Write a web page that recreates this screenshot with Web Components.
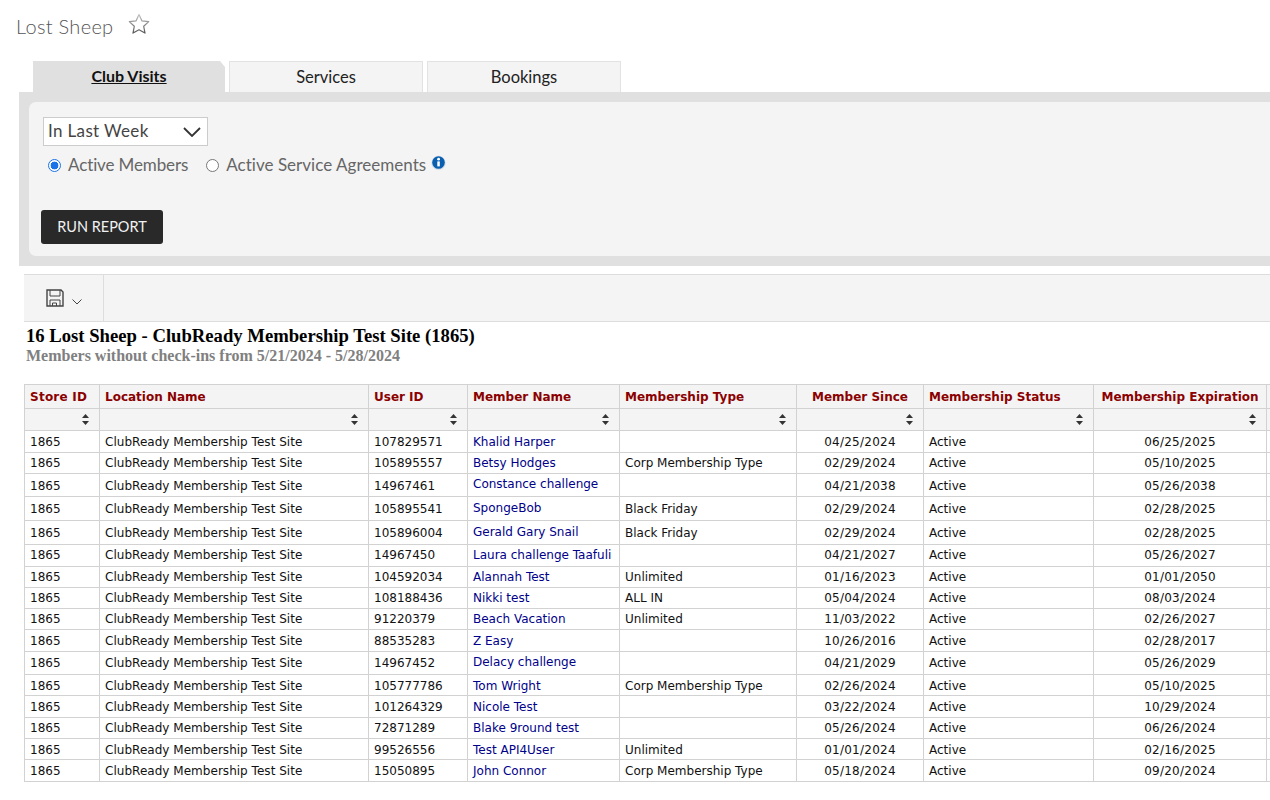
<!DOCTYPE html>
<html><head><meta charset="utf-8"><style>
html,body{margin:0;padding:0;background:#fff;overflow:hidden}
body{width:1270px;height:800px;font-family:Lato,"Open Sans",sans-serif}
</style></head><body>
<page-title>Lost Sheep</page-title>
<report-tabs></report-tabs>
<filter-panel></filter-panel>
<report-toolbar></report-toolbar>
<report-heading></report-heading>
<report-table></report-table>
<script>
const def=(name,html,init)=>customElements.define(name,class extends HTMLElement{
  constructor(){super();this.attachShadow({mode:'open'}).innerHTML=html;}
  connectedCallback(){if(init)init(this.shadowRoot);}
});
def('page-title',`<style>
:host{display:flex;align-items:center;height:50px;padding:2px 0 0 16px;box-sizing:border-box;gap:15px;color:#555;font:300 20px Lato,sans-serif;letter-spacing:.3px}
svg{display:block;margin-top:-5px}
</style><slot></slot>
<svg width="22" height="22" viewBox="0 0 22 22"><defs><linearGradient id="g" x1="0" y1="0" x2="0" y2="1"><stop offset="0" stop-color="#c4c4c4"/><stop offset="1" stop-color="#555"/></linearGradient></defs><path d="M11 1.5l2.9 6.3 6.8.8-5 4.7 1.3 6.8-6-3.4-6 3.4 1.3-6.8-5-4.7 6.8-.8z" fill="#fff" stroke="url(#g)" stroke-width="1.2" stroke-linejoin="round"/></svg>`);

def('report-tabs',`<style>
:host{display:flex;height:31px;margin:11px 0 0 33px;gap:4px;font:16.5px Lato,sans-serif;color:#222}
div{width:194px;box-sizing:border-box;display:flex;align-items:center;justify-content:center;background:#f4f4f4;border:1px solid #e2e2e2;border-bottom:0;padding-bottom:0}
.a{width:192px;background:#e0e0e0;border:0;font-size:16px;font-weight:700;text-decoration:underline;clip-path:polygon(0 0,187px 0,192px 6px,192px 100%,0 100%);padding-bottom:3px;color:#111}
</style><div class="a">Club Visits</div><div>Services</div><div>Bookings</div>`);

def('filter-panel',`<style>
:host{display:block;margin-left:19px;padding:10px 0 10px 10px;background:#e0e0e0;height:174px;box-sizing:border-box}
.in{background:#f4f4f4;border-radius:7px 0 0 7px;height:154px;box-sizing:border-box;padding:15px 0 0 14px;display:flex;flex-direction:column;align-items:flex-start;color:#666;font:17px Lato,sans-serif}
.sel{width:165px;height:29px;box-sizing:border-box;border:1px solid #ccc;background:#fff;color:#444;display:flex;align-items:center;justify-content:space-between;padding:0 6px 2px 4px;font-size:17px;letter-spacing:.35px}
.sel svg{margin-top:2px}
.row{display:flex;align-items:center;margin:9px 0 0 5px;height:20px}
.row>span{position:relative;top:-1px}
.radio{width:13px;height:13px;border-radius:50%;box-sizing:border-box;border:1px solid #777;background:#fff;margin-right:7px;top:0!important}
.on{border:1.5px solid #1a73e8;background:radial-gradient(circle,#1a73e8 0 3.6px,#fff 4.2px)}
.gap{width:18px}
.am{letter-spacing:-.12px}
.sa{letter-spacing:.03px}
svg.i{margin:-4px 0 0 5px}
button{all:unset;margin:35px 0 0 -2px;width:122px;height:34px;box-sizing:border-box;background:#292929;border-radius:3px;color:#f2f2f2;font-size:14.5px;display:flex;align-items:center;justify-content:center;padding-bottom:1px}
</style><div class="in">
<div class="sel"><span>In Last Week</span><svg width="18" height="10" viewBox="0 0 18 10"><path d="M1 1l8 8 8-8" fill="none" stroke="#333" stroke-width="1.8"/></svg></div>
<div class="row"><span class="radio on"></span><span class="am">Active Members</span><span class="gap"></span><span class="radio"></span><span class="sa">Active Service Agreements</span>
<svg class="i" width="15" height="16" viewBox="0 0 15 16"><circle cx="7.5" cy="8" r="7.2" fill="#d9dfe8"/><circle cx="7.5" cy="7.5" r="6.3" fill="#0b5fb0"/><rect x="6.3" y="6.4" width="2.5" height="5" fill="#fff"/><circle cx="7.6" cy="4.2" r="1.4" fill="#fff"/></svg></div>
<button>RUN REPORT</button></div>`);

def('report-toolbar',`<style>
:host{display:flex;margin:8px 0 0 24px;height:48px;box-sizing:border-box;background:#f4f4f4;border-top:1px solid #ddd;border-bottom:1px solid #ddd}
.b{width:80px;box-sizing:border-box;border-right:1px solid #ddd;display:flex;align-items:center;padding:0 0 0 22px;gap:8px}
</style><div class="b">
<svg width="18" height="18" viewBox="0 0 18 18"><path d="M1 1h14l2 2v14H1z" fill="none" stroke="#444" stroke-width="1.4"/><path d="M4 1v6h10V1" fill="none" stroke="#444"/><path d="M4 17v-6h10v6" fill="none" stroke="#444"/><path d="M6.5 17v-3h4v3" fill="none" stroke="#444"/></svg>
<svg width="10" height="6" viewBox="0 0 10 6" style="margin-top:7px"><path d="M.5.5L5 5 9.5.5" fill="none" stroke="#444"/></svg></div>`);

def('report-heading',`<style>
:host{display:block;margin-left:26px;height:62px;padding-top:3px;box-sizing:border-box;font-family:"Liberation Serif",serif;font-weight:700}
.t{font-size:18.67px;line-height:21px;color:#000}
.s{font-size:16px;line-height:19px;color:#808080}
</style><div class="t">16 Lost Sheep - ClubReady Membership Test Site (1865)</div><div class="s">Members without check-ins from 5/21/2024 - 5/28/2024</div>`);

const cols=[75,269,99,152,177,127,170,173,20];
const heads=['Store ID','Location Name','User ID','Member Name','Membership Type','Member Since','Membership Status','Membership Expiration',''];
// height, user id, name, type, since, expiry, name raised by px, row text offset
const rows=[
[22,'107829571','Khalid Harper','','04/25/2024','06/25/2025'],
[21,'105895557','Betsy Hodges','Corp Membership Type','02/29/2024','05/10/2025'],
[23,'14967461','Constance challenge','','04/21/2038','05/26/2038',2,'d'],
[24,'105895541','SpongeBob','Black Friday','02/29/2024','02/28/2025',1],
[24,'105896004','Gerald Gary Snail','Black Friday','02/29/2024','02/28/2025',1],
[22,'14967450','Laura challenge Taafuli','','04/21/2027','05/26/2027',0,'u'],
[21,'104592034','Alannah Test','Unlimited','01/16/2023','01/01/2050'],
[21,'108188436','Nikki test','ALL IN','05/04/2024','08/03/2024'],
[21,'91220379','Beach Vacation','Unlimited','11/03/2022','02/26/2027'],
[22,'88535283','Z Easy','','10/26/2016','02/28/2017'],
[23,'14967452','Delacy challenge','','04/21/2029','05/26/2029',1],
[21,'105777786','Tom Wright','Corp Membership Type','02/26/2024','05/10/2025',0,'d'],
[22,'101264329','Nicole Test','','03/22/2024','10/29/2024'],
[21,'72871289','Blake 9round test','','05/26/2024','06/26/2024'],
[21,'99526556','Test API4User','Unlimited','01/01/2024','02/16/2025',0,'d'],
[22,'15050895','John Connor','Corp Membership Type','05/18/2024','09/20/2024'],
];
const sortIcon='<svg width="7" height="11" viewBox="0 0 7 11"><path d="M3.5 0L7 4H0zM3.5 11L0 7h7z" fill="#333"/></svg>';
def('report-table',`<style>
:host{display:block;margin-left:24px;width:1246px;overflow:hidden;font:12px "DejaVu Sans",sans-serif;color:#111}
table{border-collapse:collapse;table-layout:fixed;width:${cols.reduce((a,b)=>a+b)}px}
td,th{border:1px solid #d2d2d2;padding:0 5px;box-sizing:border-box;white-space:nowrap;overflow:hidden;text-align:left;font-weight:400}
th{background:#f4f4f4;color:#8b0000;font-weight:700;height:24px}
.f td{background:#f4f4f4;height:22px;text-align:right;padding:0 10px 0 0;line-height:0}
.c{text-align:center}
.dt{letter-spacing:.25px}
.l{letter-spacing:.03px}
tr.d td{padding-top:2px}
tr.u td{padding-bottom:2px}
a{color:#00008b;text-decoration:none}
a.up1{position:relative;top:-1px}
a.up2{position:relative;top:-2px}
</style><table id="t"></table>`,root=>{
  const t=root.getElementById('t');
  let h='<colgroup>'+cols.map(c=>`<col style="width:${c}px">`).join('')+'</colgroup>';
  h+='<tr>'+heads.map((x,i)=>`<th class="${i==5||i==7?'c':''}" ${i==0?'style="letter-spacing:.25px"':''}>${x}</th>`).join('')+'</tr>';
  h+='<tr class="f">'+cols.map((c,i)=>`<td>${i<8?sortIcon:''}</td>`).join('')+'</tr>';
  for(const r of rows){
    h+=`<tr class="${r[7]||''}" style="height:${r[0]}px"><td>1865</td><td class="l">ClubReady Membership Test Site</td><td>${r[1]}</td><td><a class="${r[6]?'up'+r[6]:''}">${r[2]}</a></td><td>${r[3]}</td><td class="c dt">${r[4]}</td><td>Active</td><td class="c dt">${r[5]}</td><td></td></tr>`;
  }
  t.innerHTML=h;
});
</script></body></html>
